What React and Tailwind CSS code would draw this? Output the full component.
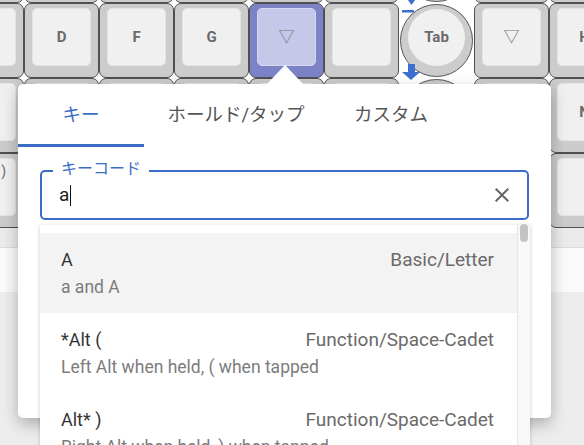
import React from 'react';

const rows = [
  [{}, {}, {}, {}, {}, {}, { circle: true }, {}, {}],
  [{}, { label: 'D' }, { label: 'F' }, { label: 'G' }, { label: '▽', sel: true }, {}, { circle: true, label: 'Tab' }, { label: '▽' }, { label: 'H' }],
  [{}, {}, {}, {}, {}, {}, { circle: true }, {}, { label: 'N' }],
  [{ corner: ')' }, {}, {}, {}, {}, {}, { circle: true }, {}, {}],
];

const items = [
  { title: 'A', desc: 'a and A', cat: 'Basic/Letter', active: true },
  { title: '*Alt (', desc: 'Left Alt when held, ( when tapped', cat: 'Function/Space-Cadet' },
  { title: 'Alt* )', desc: 'Right Alt when held, ) when tapped', cat: 'Function/Space-Cadet' },
];

const Key = ({ k }) => {
  if (k.circle) {
    return (
      <div className="w-[75px] h-[75px] shrink-0 flex items-center justify-center">
        <div className="w-[73px] h-[73px] rounded-full border border-[#555] bg-[#cccccc] flex justify-center pt-[4px]">
          <div className="w-[57px] h-[57px] rounded-full bg-[#f0f0f0] flex items-center justify-center text-[15px] font-bold text-[#6a6a6a]">
            {k.label}
          </div>
        </div>
      </div>
    );
  }
  return (
    <div
      className={`w-[75px] h-[75px] shrink-0 rounded-[7px] border border-[#505050] pt-[4px] px-[7px] pb-[11px] ${
        k.sel ? 'bg-[#7b83c6]' : 'bg-[#cccccc]'
      }`}
    >
      <div
        className={`w-full h-full rounded-[5px] border flex text-[15px] font-bold text-[#6a6a6a] ${
          k.sel ? 'bg-[#c5c8e9] border-[#d6d8f0]' : 'bg-[#f0f0f0] border-[#e4e4e4]'
        } ${k.corner ? 'justify-end items-start pt-[2px] pr-[9px]' : 'justify-center items-center'}`}
      >
        {k.corner ? (
          <span className="text-[14px] font-normal">{k.corner}</span>
        ) : k.label === '▽' ? (
          <span className="font-normal text-[#777] text-[16px]">▽</span>
        ) : (
          <span className={k.label === 'H' || k.label === 'N' ? 'mr-[4px]' : ''}>{k.label}</span>
        )}
      </div>
    </div>
  );
};

export default function App() {
  return (
    <div className="relative w-[584px] h-[445px] overflow-hidden bg-[#ededed] font-['Roboto','Noto_Sans_CJK_JP',sans-serif]">
      {/* keyboard */}
      <div className="relative h-[228px] bg-white overflow-hidden">
        <div className="flex flex-col mt-[-72px] ml-[-51px]">
          {rows.map((row, ri) => (
            <div key={ri} className="flex">
              {row.map((k, ki) => (
                <Key key={ki} k={k} />
              ))}
            </div>
          ))}
        </div>
        {/* encoder arrows */}
        <svg className="absolute left-[400px] top-[-4px]" width="20" height="18" viewBox="0 0 20 18">
          <path d="M5 0 L18 0 L11.5 9 Z" fill="#3d6fd0" />
          <rect x="2" y="14" width="12" height="2.5" fill="#3d6fd0" />
        </svg>
        <svg className="absolute left-[401px] top-[63px]" width="20" height="18" viewBox="0 0 20 18">
          <rect x="7" y="1" width="7" height="9" fill="#3d6fd0" />
          <path d="M1 9 L19 9 L10 17 Z" fill="#3d6fd0" />
        </svg>
      </div>
      <div className="h-[20px] bg-[#ebebeb] border-b border-[#dcdcdc]" />
      <div className="h-[44px] bg-[#fafafa]" />

      {/* popover */}
      <div className="absolute left-[18px] top-[84px] w-[533px] h-[334px] bg-white rounded-[5px] shadow-[0_6px_16px_rgba(0,0,0,0.28)]">
        <svg className="absolute left-[248px] top-[-19px]" width="38" height="20" viewBox="0 0 38 20">
          <path d="M0 20 L19 0 L38 20 Z" fill="#ffffff" />
        </svg>
        <div className="flex h-[63px] text-[18.5px]">
          <div className="w-[126px] flex items-center justify-center text-[#3b6cc6] border-b-[3px] border-[#3b6cc6] pt-[3px]">キー</div>
          <div className="w-[184px] flex items-center justify-center text-[#555]">ホールド/タップ</div>
          <div className="w-[126px] flex items-center justify-center text-[#555]">カスタム</div>
        </div>
        <div className="relative mx-[22px] mt-[23px] h-[50px] border-2 border-[#3b6cc6] rounded-[5px] flex items-center pl-[17px] pr-[13px]">
          <span className="absolute left-[11px] top-[-13px] px-[8px] bg-white text-[16px] leading-[20px] text-[#3b6cc6]">キーコード</span>
          <span className="text-[19px] text-[#222]">a</span>
          <span className="w-px h-[21px] bg-[#111] ml-[1px]" />
          <span className="flex-1" />
          <svg width="24" height="24" viewBox="0 0 24 24">
            <path fill="#666" d="M19 6.41 17.59 5 12 10.59 6.41 5 5 6.41 10.59 12 5 17.59 6.41 19 12 13.41 17.59 19 19 17.59 13.41 12z" />
          </svg>
        </div>
      </div>

      {/* dropdown */}
      <div className="absolute left-[40px] top-[225px] w-[490px] h-[240px] bg-white flex shadow-[0_1px_4px_rgba(0,0,0,0.22)]">
        <div className="flex-1 pt-[8px]">
          {items.map((it, i) => (
            <div key={i} className={`h-[80px] flex flex-col justify-center pl-[21px] pr-[23px] gap-[3px] ${it.active ? 'bg-[#f3f3f3]' : ''}`}>
              <div className="flex justify-between items-center leading-[24px]">
                <span className="text-[18px] text-[#333]">{it.title}</span>
                <span className="text-[19px] text-[#6a6a6a]">{it.cat}</span>
              </div>
              <div className="text-[17.5px] leading-[24px] text-[#7c7c7c]">{it.desc}</div>
            </div>
          ))}
        </div>
        <div className="w-[13px] bg-[#f8f8f8] border-l border-[#e6e6e6] flex justify-center">
          <div className="w-[8px] h-[18px] mt-[-1px] rounded-full bg-[#c3c3c3]" />
        </div>
      </div>
    </div>
  );
}
